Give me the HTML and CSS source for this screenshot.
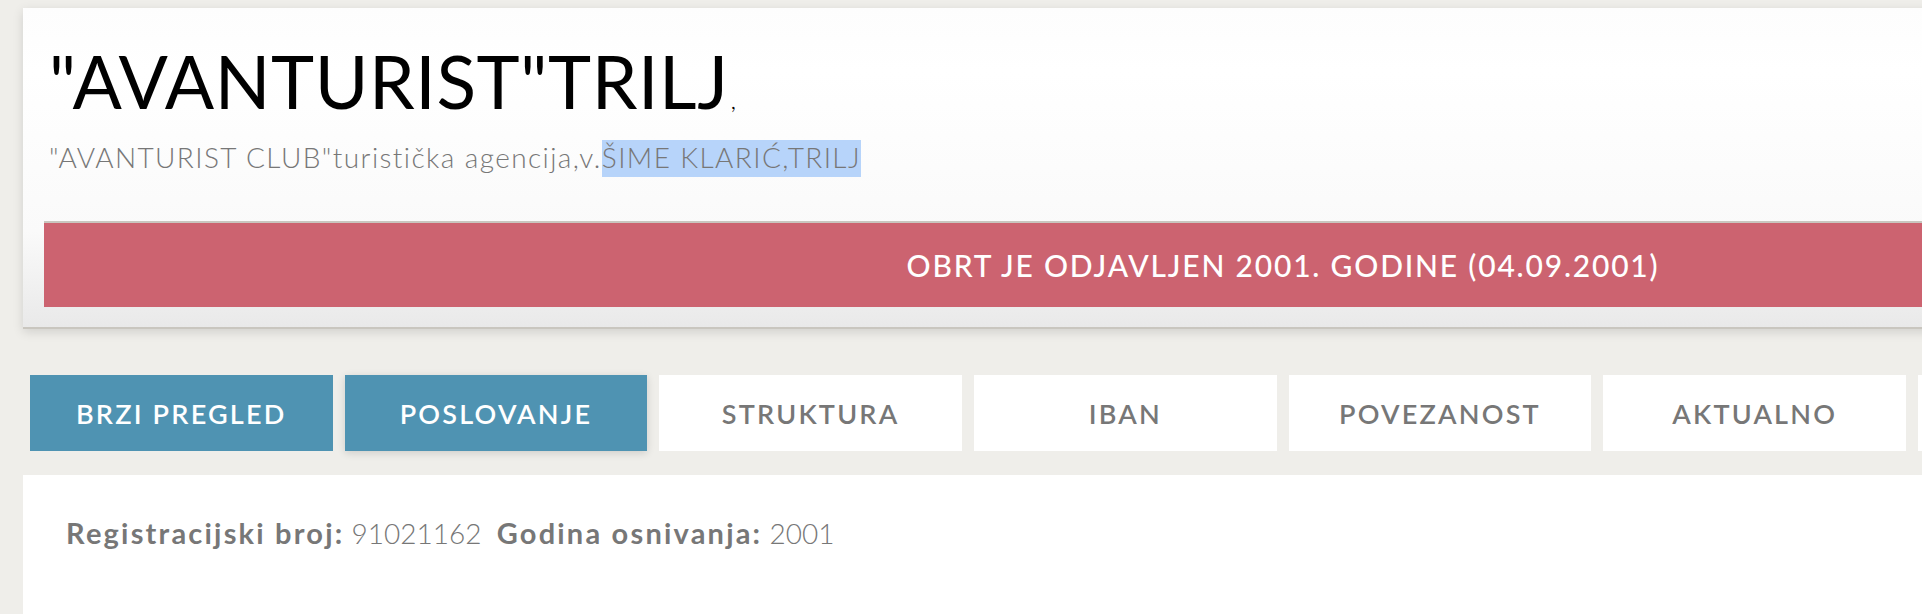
FILE: index.html
```html
<!DOCTYPE html>
<html lang="hr">
<head>
<meta charset="utf-8">
<title>"AVANTURIST"TRILJ</title>
<link rel="stylesheet" href="styles.css">
</head>
<body>
<div class="page">
  <header class="card">
    <h1 class="title">"AVANTURIST"TRILJ<span class="title-city">,</span></h1>
    <p class="subtitle">"AVANTURIST CLUB"turistička agencija,v.<span class="sel">ŠIME KLARIĆ,TRILJ</span></p>
    <div class="banner">OBRT JE ODJAVLJEN 2001. GODINE (04.09.2001)</div>
  </header>
  <nav class="tabs">
    <a class="tab tab-active">BRZI PREGLED</a>
    <a class="tab tab-active tab-hover">POSLOVANJE</a>
    <a class="tab">STRUKTURA</a>
    <a class="tab">IBAN</a>
    <a class="tab">POVEZANOST</a>
    <a class="tab">AKTUALNO</a>
    <a class="tab">DOKUMENTI</a>
    <a class="tab">KONTAKT</a>
  </nav>
  <section class="panel">
    <p class="info"><span class="label">Registracijski broj:</span> <span class="value">91021162</span> <span class="label">Godina osnivanja:</span> <span class="value">2001</span></p>
  </section>
</div>
</body>
</html>
```
FILE: styles.css
```css
html, body {
  margin: 0;
  padding: 0;
  overflow: hidden;
  background: #efeeea;
}
body {
  font-family: "Lato", "Noto Sans", sans-serif;
  color: #777;
}
.page {
  width: 2520px;
  padding: 8px 0 0 23px;
}
.card {
  background: linear-gradient(to bottom, #fdfdfd 0%, #ffffff 20%, #fafafa 70%, #e9e9e9 100%);
  border-bottom: 2px solid #c9c6bf;
  box-shadow: 0 3px 10px rgba(0, 0, 0, 0.13);
  padding: 33px 21px 20px 21px;
}
.title {
  margin: 0 0 0 5px;
  font-size: 73px;
  line-height: 80px;
  font-weight: 400;
  letter-spacing: 0.6px;
  color: #000;
}
.title-city {
  font-size: 26px;
  line-height: 1;
  font-weight: 300;
  letter-spacing: 0;
  margin-left: 2px;
  color: #000;
}
.subtitle {
  margin: 18px 0 0 5px;
  font-size: 28px;
  line-height: 36px;
  font-weight: 300;
  letter-spacing: 1.4px;
  color: #777;
}
.sel {
  background: #b7d4fa;
  padding-bottom: 3px;
}
.banner {
  margin-top: 46px;
  border-top: 2px solid #c9c6bf;
  background: #cc6370;
  color: #fff;
  height: 84px;
  display: flex;
  align-items: center;
  justify-content: center;
  font-size: 30px;
  font-weight: 500;
  letter-spacing: 1.8px;
}
.tabs {
  display: flex;
  gap: 12.2px;
  margin: 46px 0 0 7px;
}
.tab {
  flex: 0 0 302.5px;
  height: 76px;
  display: flex;
  align-items: center;
  justify-content: center;
  background: #fff;
  color: #777;
  font-size: 27px;
  font-weight: 600;
  letter-spacing: 2.2px;
}
.tab-active {
  background: #4f93b2;
  color: #fff;
}
.tab-hover {
  box-shadow: 0 2px 8px rgba(0, 0, 0, 0.14);
}
.panel {
  margin-top: 24px;
  background: #fff;
  height: 200px;
  padding: 40px 43px 0;
}
.info {
  margin: 0;
  font-size: 28px;
  line-height: 36px;
}
.label {
  font-size: 29px;
  font-weight: 700;
  letter-spacing: 2.2px;
  color: #777;
}
.value {
  font-weight: 300;
  margin-right: 8px;
}
```
